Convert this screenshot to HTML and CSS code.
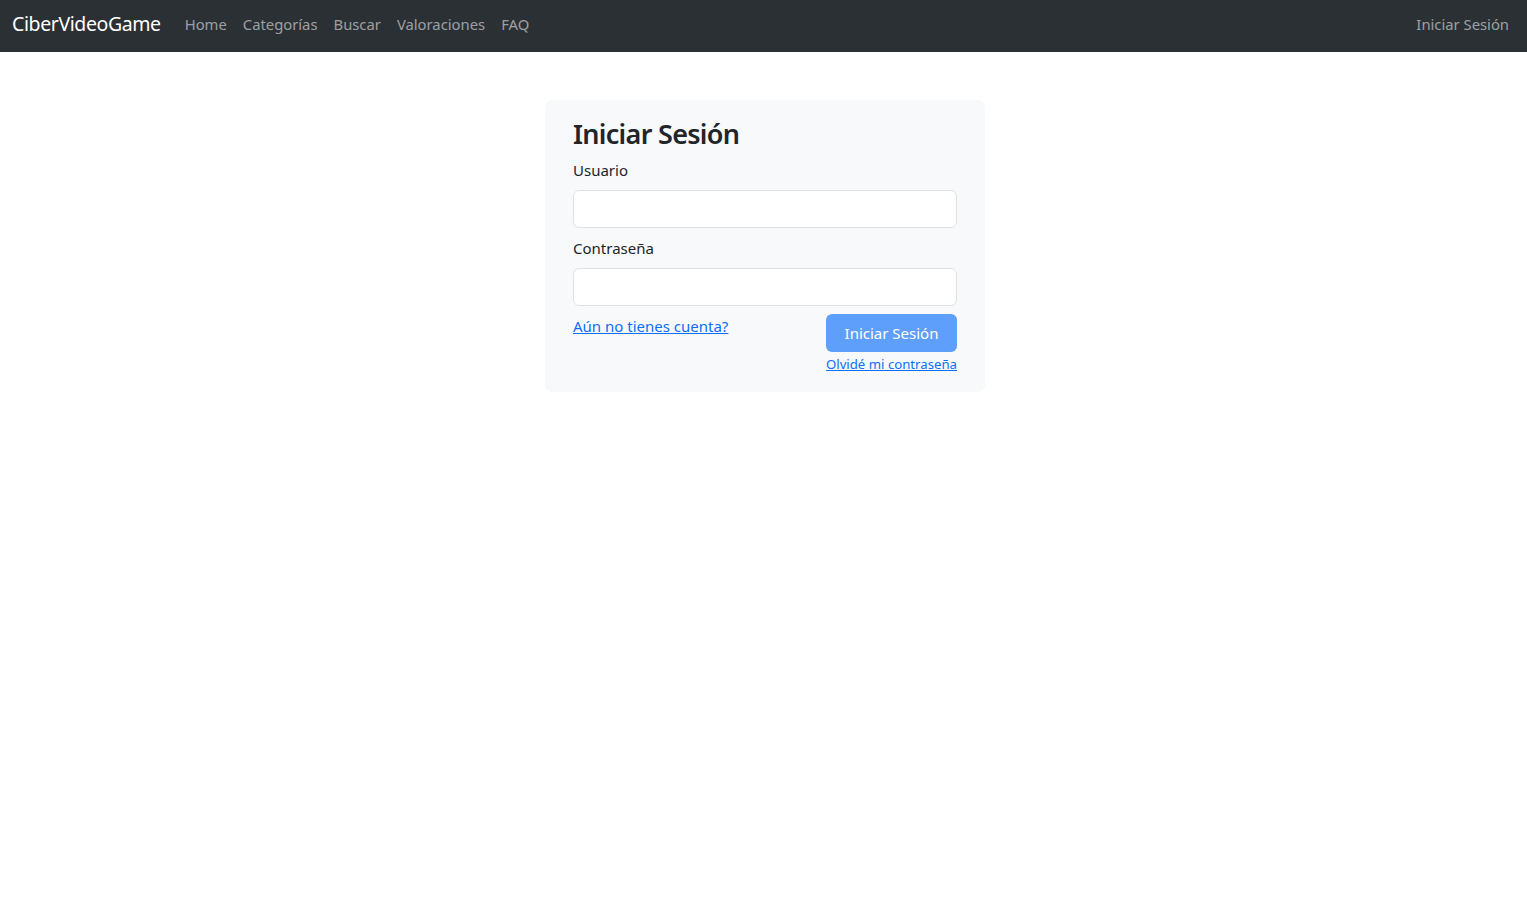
FILE: index.html
```html
<!DOCTYPE html>
<html lang="es">
<head>
<meta charset="utf-8">
<title>CiberVideoGame</title>
<link rel="stylesheet" href="styles.css">
</head>
<body>
<nav class="navbar">
  <div class="nav-left">
    <a class="brand" href="#">CiberVideoGame</a>
    <ul class="nav-links">
      <li><a href="#">Home</a></li>
      <li><a href="#">Categorías</a></li>
      <li><a href="#">Buscar</a></li>
      <li><a href="#">Valoraciones</a></li>
      <li><a href="#">FAQ</a></li>
    </ul>
  </div>
  <ul class="nav-links">
    <li><a href="#">Iniciar Sesión</a></li>
  </ul>
</nav>
<main class="main">
  <section class="card">
    <h3 class="title">Iniciar Sesión</h3>
    <label class="label" for="u">Usuario</label>
    <input class="input" id="u" type="text">
    <label class="label" for="p">Contraseña</label>
    <input class="input" id="p" type="password">
    <div class="actions">
      <a class="link" href="#">Aún no tienes cuenta?</a>
      <div class="right">
        <button class="btn" disabled>Iniciar Sesión</button>
        <a class="link small" href="#">Olvidé mi contraseña</a>
      </div>
    </div>
  </section>
</main>
</body>
</html>
```

FILE: styles.css
```css
* { box-sizing: border-box; }
html, body { margin: 0; padding: 0; }
body {
  font-family: "Noto Sans", "Open Sans", sans-serif;
  font-size: 16px;
  line-height: 1.5;
  color: #212529;
  background: #fff;
}
.navbar {
  height: 52px;
  background: #2b3035;
  display: flex;
  align-items: center;
  justify-content: space-between;
  padding: 0 10px 4px 12px;
}
.nav-left { display: flex; align-items: center; }
.brand {
  color: #fff;
  font-size: 19.5px;
  text-decoration: none;
  margin-right: 16px;
  line-height: 30px;
  letter-spacing: -0.4px;
}
.nav-links {
  list-style: none;
  margin: 0;
  padding: 0;
  display: flex;
}
.nav-links a {
  display: block;
  padding: 0 8px;
  color: rgba(255,255,255,0.55);
  text-decoration: none;
  font-size: 14.8px;
  line-height: 24px;
}
.main {
  display: flex;
  justify-content: center;
  padding-top: 48px;
}
.card {
  width: 440px;
  margin-left: 3px;
  background: #f8f9fa;
  border-radius: 7px;
  padding: 18px 28px 17px;
  display: flex;
  flex-direction: column;
}
.title {
  margin: 0 0 8px;
  font-size: 27px;
  font-weight: 600;
  line-height: 1.2;
  letter-spacing: -0.7px;
}
.label {
  display: block;
  margin-bottom: 8px;
  font-size: 15px;
  line-height: 24px;
}
.input {
  display: block;
  width: 100%;
  height: 38px;
  border: 1px solid #dee2e6;
  border-radius: 6px;
  background: #fff;
  margin-bottom: 8px;
  font: inherit;
}
.actions {
  display: flex;
  justify-content: space-between;
  align-items: flex-start;
}
.link {
  color: #0d6efd;
  text-decoration: underline;
  font-size: 15px;
  line-height: 24px;
}
.right {
  display: flex;
  flex-direction: column;
  align-items: flex-end;
}
.btn {
  height: 38px;
  width: 131px;
  border: none;
  border-radius: 6px;
  background: #5f9ffc;
  color: #fff;
  font-family: inherit;
  font-size: 15px;
  padding: 0 12px;
}
.link.small {
  font-size: 13.2px;
  line-height: 21px;
  margin-top: 2px;
}
```
